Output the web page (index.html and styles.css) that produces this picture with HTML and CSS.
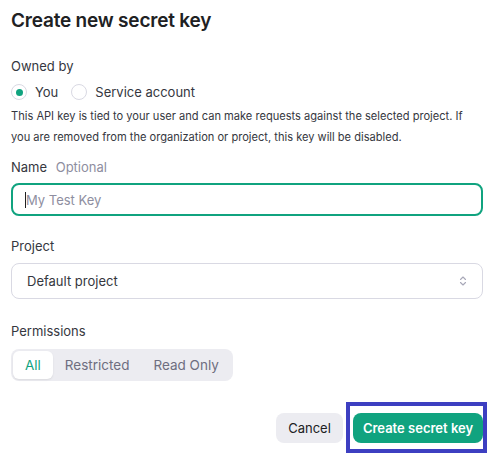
FILE: index.html
```html
<!DOCTYPE html>
<html>
<head>
<meta charset="utf-8">
<link rel="stylesheet" href="styles.css">
</head>
<body>
<div class="modal">
  <h1 class="title">Create new secret key</h1>
  <div class="field owned">
    <div class="label">Owned by</div>
    <div class="radios">
      <label class="radio"><span class="dot on"></span>You</label>
      <label class="radio"><span class="dot"></span>Service account</label>
    </div>
    <p class="help">This API key is tied to your user and can make requests against the selected project. If you are removed from the organization or project, this key will be disabled.</p>
  </div>
  <div class="field name">
    <div class="label">Name <span class="opt">Optional</span></div>
    <div class="input"><span class="caret"></span><span class="ph">My Test Key</span></div>
  </div>
  <div class="field project">
    <div class="label">Project</div>
    <div class="select"><span>Default project</span>
      <svg class="chev" width="10" height="12" viewBox="0 0 10 12"><path d="M2.5 4.5 L5 2 L7.5 4.5 M2.5 7.5 L5 10 L7.5 7.5" fill="none" stroke="#a8a8b8" stroke-width="1.1" stroke-linecap="round" stroke-linejoin="round"/></svg>
    </div>
  </div>
  <div class="field perms">
    <div class="label">Permissions</div>
    <div class="seg">
      <span class="seg-item active">All</span>
      <span class="seg-item">Restricted</span>
      <span class="seg-item">Read Only</span>
    </div>
  </div>
  <div class="actions">
    <button class="btn cancel">Cancel</button>
    <div class="highlight"><button class="btn primary">Create secret key</button></div>
  </div>
</div>
</body>
</html>
```
FILE: styles.css
```css
html, body { margin: 0; padding: 0; background: #fff; }
body { font-family: Inter, "Noto Sans", sans-serif; color: #202123; }
.modal { width: 496px; height: 455px; box-sizing: border-box; padding: 8px 13px 0 11px; }
.title { margin: 0; font-size: 19px; font-weight: 600; line-height: 26px; letter-spacing: -0.2px; color: #202123; }
.owned { margin-top: 23px; }
.name { margin-top: 10px; }
.project { margin-top: 21px; }
.perms { margin-top: 23px; }
.label { font-size: 13px; line-height: 18px; color: #353740; }
.opt { color: #8e8ea0; margin-left: 5px; }
.radios { display: flex; gap: 13px; margin-top: 8px; }
.radio { display: flex; align-items: center; gap: 8px; font-size: 13px; line-height: 18px; color: #353740; }
.dot { width: 14px; height: 14px; border: 1px solid #d9d9e3; border-radius: 50%; box-sizing: content-box; display: flex; align-items: center; justify-content: center; }
.dot.on::after { content: ""; width: 7px; height: 7px; border-radius: 50%; background: #10a37f; }
.help { margin: 5px 0 0; font-size: 11.1px; line-height: 21px; color: #353740; }
.input { margin-top: 7px; height: 33px; box-sizing: border-box; border: 2px solid #10a37f; border-radius: 8px; display: flex; align-items: center; padding-left: 12px; }
.caret { width: 1px; height: 16px; background: #202123; }
.ph { font-size: 13px; color: #8e8ea0; }
.select { margin-top: 8px; height: 36px; box-sizing: border-box; border: 1px solid #d9d9e3; border-radius: 8px; display: flex; align-items: center; justify-content: space-between; padding: 0 14px 0 15px; font-size: 13px; color: #353740; }
.seg { margin-top: 9px; display: inline-flex; background: #ececf1; border-radius: 8px; padding: 2px; }
.seg-item { font-size: 13.5px; line-height: 28px; padding: 0 12px; color: #6e6e80; border-radius: 6px; }
.seg-item.active { background: #fff; color: #10a37f; box-shadow: 0 1px 2px rgba(0,0,0,0.08); }
.actions { display: flex; justify-content: flex-end; align-items: center; gap: 3px; margin-top: 21px; margin-right: -4px; }
.btn { font-family: inherit; font-size: 13px; border: none; border-radius: 8px; height: 30px; cursor: pointer; }
.cancel { background: #ececf1; color: #202123; padding: 0 12px; width: 67px; margin-top: 1px; }
.highlight { border: 4px solid #3d3fc1; padding: 7px 0 6px 3px; }
.primary { background: #10a37f; color: #fff; font-weight: 600; width: 130px; padding: 0; }
```
